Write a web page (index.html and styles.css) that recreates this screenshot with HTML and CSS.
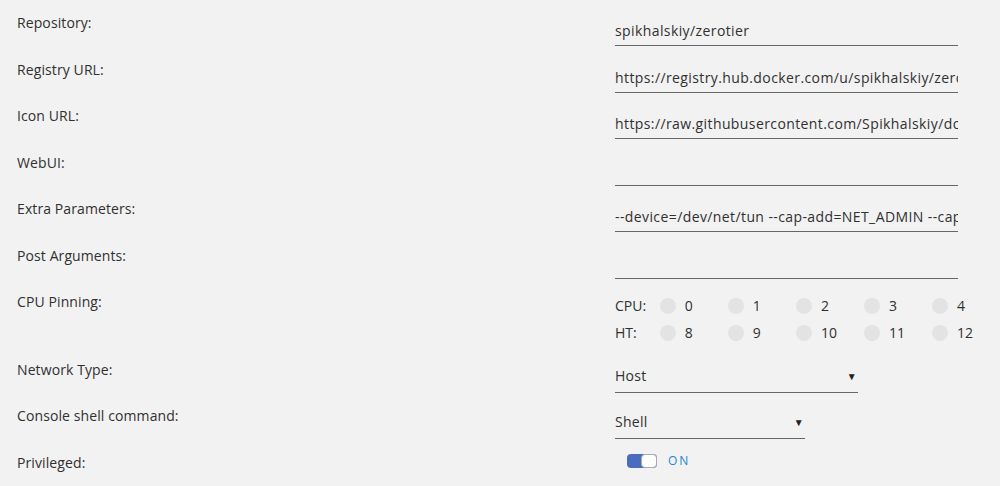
FILE: index.html
```html
<!DOCTYPE html>
<html lang="en">
<head>
    <meta charset="UTF-8">
    <meta name="viewport" content="width=device-width, initial-scale=1.0">
    <title>Container Settings</title>
    <link rel="stylesheet" href="styles.css">
</head>
<body>
    <div class="settings">
        <div class="row">
            <div class="label">Repository:</div>
            <div class="value"><div class="field">spikhalskiy/zerotier</div></div>
        </div>
        <div class="row">
            <div class="label">Registry URL:</div>
            <div class="value"><div class="field">https://registry.hub.docker.com/u/spikhalskiy/zerotier/</div></div>
        </div>
        <div class="row">
            <div class="label">Icon URL:</div>
            <div class="value"><div class="field">https://raw.githubusercontent.com/Spikhalskiy/docker-templates/master/zerotier.png</div></div>
        </div>
        <div class="row">
            <div class="label">WebUI:</div>
            <div class="value"><div class="field"></div></div>
        </div>
        <div class="row">
            <div class="label">Extra Parameters:</div>
            <div class="value"><div class="field">--device=/dev/net/tun --cap-add=NET_ADMIN --cap-add=SYS_ADMIN</div></div>
        </div>
        <div class="row">
            <div class="label">Post Arguments:</div>
            <div class="value"><div class="field"></div></div>
        </div>
        <div class="row">
            <div class="label">CPU Pinning:</div>
            <div class="value">
                <div class="cpu-line">
                    <span class="cpu-name">CPU:</span>
                    <span class="cpu"><span class="dot"></span>0</span>
                    <span class="cpu"><span class="dot"></span>1</span>
                    <span class="cpu"><span class="dot"></span>2</span>
                    <span class="cpu"><span class="dot"></span>3</span>
                    <span class="cpu"><span class="dot"></span>4</span>
                </div>
                <div class="cpu-line">
                    <span class="cpu-name">HT:</span>
                    <span class="cpu"><span class="dot"></span>8</span>
                    <span class="cpu"><span class="dot"></span>9</span>
                    <span class="cpu"><span class="dot"></span>10</span>
                    <span class="cpu"><span class="dot"></span>11</span>
                    <span class="cpu"><span class="dot"></span>12</span>
                </div>
            </div>
        </div>
        <div class="row">
            <div class="label">Network Type:</div>
            <div class="value"><div class="select network">Host<span class="arrow">&#9660;</span></div></div>
        </div>
        <div class="row">
            <div class="label">Console shell command:</div>
            <div class="value"><div class="select shell">Shell<span class="arrow">&#9660;</span></div></div>
        </div>
        <div class="row">
            <div class="label">Privileged:</div>
            <div class="value">
                <div class="switch">
                    <span class="track"><span class="knob"></span></span>
                    <span class="switch-text">ON</span>
                </div>
            </div>
        </div>
    </div>
</body>
</html>
```

FILE: styles.css
```css
* {
    margin: 0;
    padding: 0;
    box-sizing: border-box;
}

body {
    font-family: 'Open Sans', sans-serif;
    font-size: 14px;
    background: #f2f2f2;
    color: #303030;
    overflow: hidden;
}

.settings {
    padding: 13px 0 0 17px;
}

.row {
    display: grid;
    grid-template-columns: 598px 1fr;
    margin-bottom: 13.5px;
}

.label {
    line-height: 20px;
    letter-spacing: 0.1px;
}

.value {
    min-width: 0;
}

.field {
    width: 343px;
    height: 30px;
    margin-top: 3px;
    line-height: 29px;
    letter-spacing: 0.4px;
    border-bottom: 1px solid #666;
    white-space: nowrap;
    overflow: hidden;
}

.cpu-line {
    display: flex;
    align-items: center;
    height: 27px;
}

.cpu-name {
    width: 45px;
}

.cpu {
    display: flex;
    align-items: center;
    width: 68.3px;
}

.dot {
    width: 16px;
    height: 16px;
    border-radius: 50%;
    background: #e3e3e3;
    margin-right: 9px;
}

.select {
    position: relative;
    height: 30px;
    margin-top: 3px;
    line-height: 26px;
    letter-spacing: 0.3px;
    border-bottom: 1px solid #666;
}

.select.network {
    width: 243px;
}

.select.shell {
    width: 190px;
}

.arrow {
    position: absolute;
    right: 1px;
    top: 0;
    font-size: 10px;
    color: #222;
}

.switch {
    display: flex;
    align-items: center;
    gap: 11px;
    margin: 0 0 0 12px;
    height: 16px;
}

.track {
    display: flex;
    justify-content: flex-end;
    width: 30px;
    height: 14px;
    border-radius: 4px;
    background: #4a6cbf;
}

.knob {
    width: 16px;
    height: 14px;
    border-radius: 4px;
    background: #fff;
    border: 1px solid #aaa;
}

.switch-text {
    font-size: 12px;
    letter-spacing: 2px;
    color: #2288d6;
}
```
